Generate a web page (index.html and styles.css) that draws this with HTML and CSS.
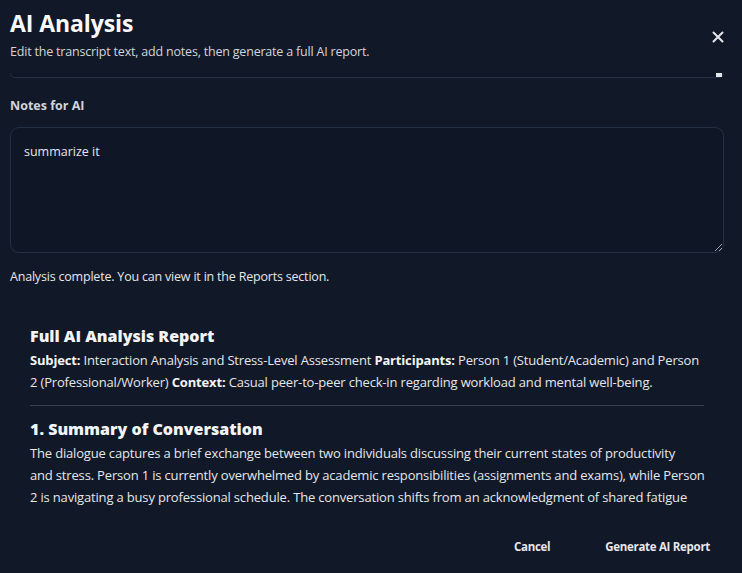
FILE: index.html
```html
<!DOCTYPE html>
<html lang="en">
<head>
<meta charset="utf-8">
<title>AI Analysis</title>
<link rel="stylesheet" href="styles.css">
</head>
<body>
<div class="modal">
  <header class="modal-header">
    <div class="titles">
      <h1 class="title">AI Analysis</h1>
      <p class="subtitle">Edit the transcript text, add notes, then generate a full AI report.</p>
    </div>
    <button class="close" aria-label="Close">
      <svg width="12" height="12" viewBox="0 0 12 12"><path d="M1.5 1.5 L10.5 10.5 M10.5 1.5 L1.5 10.5" stroke="#e5e7eb" stroke-width="2" stroke-linecap="round"/></svg>
    </button>
  </header>
  <div class="modal-body">
    <div class="scroll">
      <div class="transcript"><span class="grip"></span></div>
      <label class="label">Notes for AI</label>
      <div class="notes">summarize it<span class="resize"></span></div>
      <p class="status">Analysis complete. You can view it in the Reports section.</p>
      <div class="report">
        <h2 class="rh">Full AI Analysis Report</h2>
        <p class="rp"><strong>Subject:</strong> Interaction Analysis and Stress-Level Assessment <strong>Participants:</strong> Person 1 (Student/Academic) and Person 2 (Professional/Worker) <strong>Context:</strong> Casual peer-to-peer check-in regarding workload and mental well-being.</p>
        <hr class="rule">
        <h2 class="rh">1. Summary of Conversation</h2>
        <p class="rp rp-lines">The dialogue captures a brief exchange between two individuals discussing their current states of productivity<br>and stress. Person 1 is currently overwhelmed by academic responsibilities (assignments and exams), while Person<br>2 is navigating a busy professional schedule. The conversation shifts from an acknowledgment of shared fatigue<br>to a collective sense of encouragement, where Person 2 suggests taking a break, which Person 1 welcomes.</p>
      </div>
    </div>
  </div>
  <footer class="modal-footer">
    <button class="btn">Cancel</button>
    <button class="btn">Generate AI Report</button>
  </footer>
</div>
</body>
</html>
```

FILE: styles.css
```css
* { box-sizing: border-box; }
html, body { margin: 0; padding: 0; height: 100%; }
body {
  background: #111827;
  color: #e5e7eb;
  font-family: "Open Sans", "Noto Sans", sans-serif;
  overflow: hidden;
}
.modal {
  height: 573px;
  display: flex;
  flex-direction: column;
  background: #111827;
}
.modal-header {
  display: flex;
  justify-content: space-between;
  align-items: flex-start;
  padding: 8px 10px 0 10px;
  height: 73px;
  flex: none;
}
.title {
  margin: 0;
  font-size: 23px;
  line-height: 30px;
  font-weight: 700;
  color: #f9fafb;
  letter-spacing: -0.1px;
}
.subtitle {
  margin: 5px 0 0;
  font-size: 12.5px;
  line-height: 17px;
  color: #d1d5db;
  letter-spacing: -0.2px;
}
.close {
  background: none;
  border: 0;
  padding: 0;
  margin: 23px 8px 0 0;
  cursor: pointer;
  display: flex;
}
.modal-body {
  flex: 1;
  overflow: hidden;
  padding: 0 18px 0 10px;
}
.scroll {
  display: flex;
  flex-direction: column;
}
.transcript {
  height: 5px;
  border: 1px solid #243044;
  border-top: 0;
  border-radius: 0 0 8px 8px;
  background: #0f1626;
  position: relative;
}
.grip {
  position: absolute;
  right: 1px;
  bottom: 0px;
  width: 6px;
  height: 4px;
  background: #e5e7eb;
}
.label {
  margin-top: 19px;
  font-size: 12.5px;
  line-height: 17px;
  font-weight: 700;
  color: #d1d5db;
}
.notes {
  margin-top: 13px;
  height: 126px;
  border: 1px solid #243044;
  border-radius: 9px;
  background: #0f1626;
  padding: 15px 13px;
  font-size: 12.5px;
  line-height: 18px;
  color: #e5e7eb;
  position: relative;
}
.resize {
  position: absolute;
  right: 1px;
  bottom: 1px;
  width: 7px;
  height: 7px;
  background: linear-gradient(135deg, transparent 45%, #9ca3af 45%, #9ca3af 55%, transparent 55%, transparent 75%, #9ca3af 75%, #9ca3af 85%, transparent 85%);
}
.status {
  margin: 15px 0 0;
  font-size: 12.5px;
  line-height: 17px;
  color: #e5e7eb;
  letter-spacing: -0.2px;
}
.report {
  padding: 40px 20px 0 20px;
}
.rh {
  margin: 0;
  font-size: 16px;
  line-height: 22px;
  font-weight: 800;
  color: #f3f4f6;
}
.rp {
  margin: 3px 0 0;
  font-size: 13px;
  line-height: 21.7px;
  color: #e5e7eb;
  letter-spacing: -0.17px;
}
.rp-lines { white-space: nowrap; }
.rp strong { font-weight: 700; color: #f3f4f6; }
.rule {
  border: 0;
  border-top: 1px solid #374151;
  margin: 12px 0 12px;
}
.modal-footer {
  flex: none;
  height: 61px;
  display: flex;
  justify-content: flex-end;
  align-items: center;
  gap: 31px;
  padding: 7px 20px 0 0;
}
.btn {
  background: none;
  border: 0;
  font-family: inherit;
  font-size: 11.5px;
  font-weight: 700;
  letter-spacing: -0.3px;
  color: #e5e7eb;
  padding: 8px 12px;
  cursor: pointer;
}
```
